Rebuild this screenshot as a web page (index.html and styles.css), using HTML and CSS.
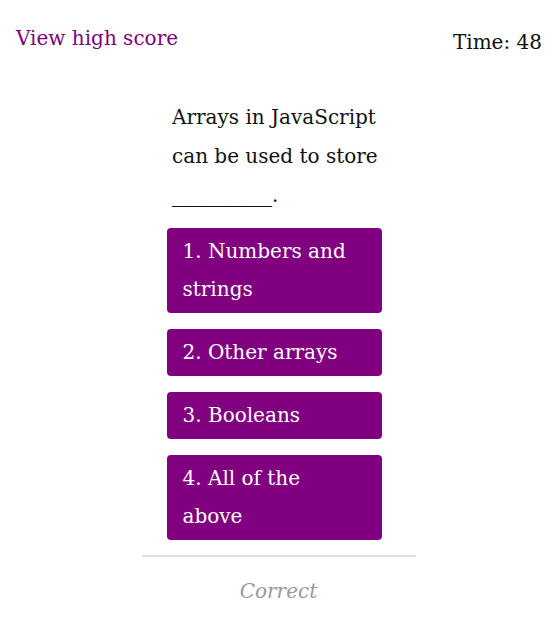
FILE: index.html
```html
<!DOCTYPE html>
<html>
<head>
<meta charset="utf-8">
<link rel="stylesheet" href="styles.css">
</head>
<body>
<header class="top">
  <a class="highscore" href="#">View high score</a>
  <div class="timer">Time: 48</div>
</header>
<main class="quiz">
  <p class="question">Arrays in JavaScript can be used to store __________.</p>
  <div class="choices">
    <button class="choice">1. Numbers and strings</button>
    <button class="choice">2. Other arrays</button>
    <button class="choice">3. Booleans</button>
    <button class="choice">4. All of the above</button>
  </div>
  <div class="feedback">Correct</div>
</main>
</body>
</html>
```
FILE: styles.css
```css
body {
  margin: 0;
  font-family: "DejaVu Serif", serif;
  font-size: 20px;
  color: #111;
  background: #fff;
}
.top {
  display: flex;
  justify-content: space-between;
  align-items: flex-start;
  padding: 24px 15px 0 16px;
}
.highscore {
  color: #800080;
  text-decoration: none;
  line-height: 28px;
}
.timer {
  line-height: 28px;
  margin-top: 4px;
}
.quiz {
  width: 274px;
  margin: 0 auto;
  display: flex;
  flex-direction: column;
  align-items: center;
}
.question {
  margin: 42px 0 0 0;
  width: 213px;
  line-height: 39px;
}
.choices {
  display: flex;
  flex-direction: column;
  gap: 16px;
  width: 215px;
  margin-top: 13px;
  margin-left: -9px;
}
.choice {
  display: block;
  text-align: left;
  background: #800080;
  color: #fff;
  border: none;
  border-radius: 4px;
  font-family: inherit;
  font-size: 20px;
  line-height: 38px;
  padding: 4px 16px 5px 16px;
}
.feedback {
  align-self: stretch;
  border-top: 2px solid #e0e0e0;
  margin-top: 15px;
  padding-top: 22px;
  text-align: center;
  font-style: italic;
  color: #999;
}
```
